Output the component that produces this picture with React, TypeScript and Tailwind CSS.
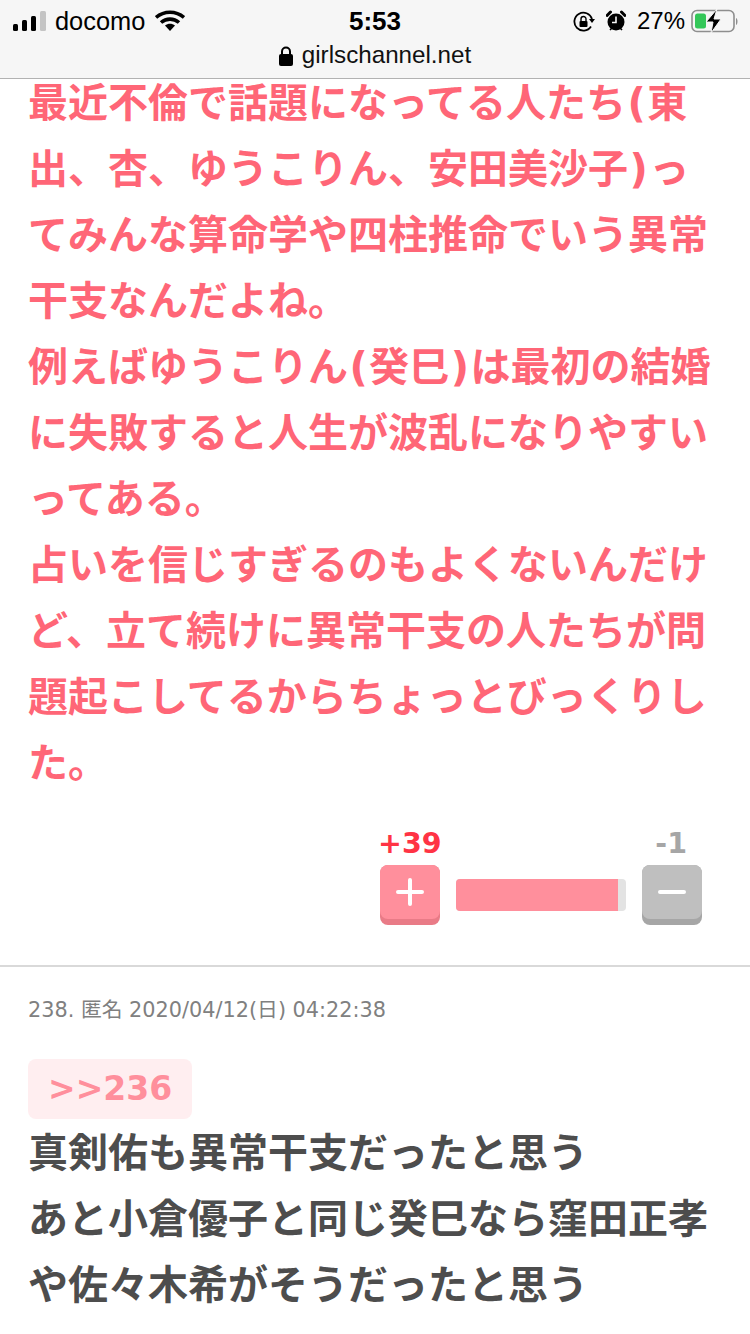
import type { ReactNode } from 'react';

const cjk = "font-['DejaVu_Sans','Noto_Sans_CJK_JP',sans-serif]";

const pinkLines = [
  '最近不倫で話題になってる人たち(東',
  '出、杏、ゆうこりん、安田美沙子)っ',
  'てみんな算命学や四柱推命でいう異常',
  '干支なんだよね。',
  '例えばゆうこりん(癸巳)は最初の結婚',
  'に失敗すると人生が波乱になりやすい',
  'ってある。',
  '占いを信じすぎるのもよくないんだけ',
  'ど、立て続けに異常干支の人たちが問',
  '題起こしてるからちょっとびっくりし',
  'た。',
];

const greyLines = ['真剣佑も異常干支だったと思う', 'あと小倉優子と同じ癸巳なら窪田正孝', 'や佐々木希がそうだったと思う'];

// parens sit a little wider than the font's own advance
function spacedParens(line: string): ReactNode[] {
  return line.split(/([()])/).map((part, i) =>
    part === '(' || part === ')' ? (
      <span key={i} className="mx-[1.5px]">
        {part}
      </span>
    ) : (
      part
    ),
  );
}

function StatusBar() {
  return (
    <div className="flex h-[42px] items-center justify-between pl-[13px] pr-[11px] font-['Liberation_Sans',sans-serif] text-[24px] text-black">
      <div className="flex w-[240px] items-center">
        <svg width="33" height="20" viewBox="0 0 33 20" className="mr-[9px]">
          <rect x="0" y="13" width="5" height="7" rx="1.5" fill="#000" />
          <rect x="9" y="9" width="5" height="11" rx="1.5" fill="#000" />
          <rect x="18" y="5" width="5" height="15" rx="1.5" fill="#000" />
          <rect x="27" y="0" width="6" height="20" rx="1.5" fill="#c4c4c4" />
        </svg>
        <span className="text-[25.4px]">docomo</span>
        <svg width="30" height="22" viewBox="0 0 30 22" className="ml-[10px]">
          <path d="M1 7.5C9 .5 21 .5 29 7.5" fill="none" stroke="#000" strokeWidth="3.6" />
          <path d="M6 12.5c5.200-4.500 12.800-4.500 18 0" fill="none" stroke="#000" strokeWidth="3.6" />
          <path d="M10 15.500c3-2.400 7-2.400 10 0L15 21z" fill="#000" />
        </svg>
      </div>
      <span className="-ml-[2px] text-[26px] font-bold">5:53</span>
      <div className="flex w-[240px] items-center justify-end">
        <svg width="22" height="22" viewBox="0 0 22 22" className="mr-[11px] mt-[1px]">
          <path d="M18 15.500A9 9 0 1 1 19 8" fill="none" stroke="#000" strokeWidth="1.800" />
          <path d="M16 8h6l-3 4z" fill="#000" />
          <rect x="6.500" y="10" width="8" height="6" rx="1" fill="#000" />
          <path d="M8 10V8a2.500 2.500 0 0 1 5 0v2" fill="none" stroke="#000" strokeWidth="1.400" />
        </svg>
        <svg width="20" height="22" viewBox="0 0 20 22" className="mr-[11px]">
          <circle cx="10" cy="12" r="8.500" fill="#000" />
          <path d="M1 5.500 4.500 2M19 5.500 15.500 2" stroke="#000" strokeWidth="3" strokeLinecap="round" />
          <path d="M10 6.500V12.500H6" fill="none" stroke="#f6f6f6" strokeWidth="1.600" />
          <path d="M4 20l2-2M16 20l-2-2" stroke="#000" strokeWidth="1.600" />
        </svg>
        <span>27%</span>
        <svg width="48" height="24" viewBox="0 0 48 24" className="ml-[6px]">
          <rect x="1" y="1.500" width="42" height="21" rx="5" fill="none" stroke="#8e8e8e" strokeWidth="1.600" />
          <rect x="4" y="4.500" width="11" height="15" rx="2.500" fill="#34c759" />
          <path d="M26 0 15 13h7l-2 11 10-14h-7z" fill="#000" stroke="#f6f6f6" strokeWidth="1" />
          <path d="M45 9c2 .5 2 6.500 0 7z" fill="#8e8e8e" />
        </svg>
      </div>
    </div>
  );
}

function AddressBar() {
  return (
    <div className="flex h-[36px] items-start justify-center font-['Liberation_Sans',sans-serif] text-[24.2px] leading-[26px] text-[#111]">
      <svg width="14" height="20" viewBox="0 0 14 20" className="mr-[9px] mt-[4px]">
        <rect x="0" y="8" width="14" height="12" rx="2" fill="#000" />
        <path d="M3 9V5.500a4 4 0 0 1 8 0V9" fill="none" stroke="#000" strokeWidth="2" />
      </svg>
      <span>girlschannel.net</span>
    </div>
  );
}

function VoteBlock() {
  return (
    <div className={`flex justify-end pr-[48px] ${cjk} font-bold`}>
      <div className="flex w-[322px] flex-col">
        <div className="flex h-[36px] items-start justify-between text-[28.5px] leading-[30px]">
          <span className="-ml-[2px] text-[#ff3344]">+39</span>
          <span className="mr-[15px] text-[#a6a6a6]">-1</span>
        </div>
        <div className="flex items-center">
          <button className="relative h-[60px] w-[60px] rounded-[8px] bg-[#e97b87]">
            <span className="absolute inset-x-0 top-0 flex h-[54px] items-center justify-center rounded-[8px] bg-[#ff8f9c]">
              <svg width="28" height="28" viewBox="0 0 28 28">
                <path d="M14 2v24M2 14h24" stroke="#fff" strokeWidth="4" strokeLinecap="round" />
              </svg>
            </span>
          </button>
          <div className="mx-[16px] mb-[1px] flex h-[32px] flex-1 overflow-hidden rounded-[4px] bg-[#e3e3e3]">
            <div className="h-full w-[162px] bg-[#ff8f9c]" />
          </div>
          <button className="relative h-[60px] w-[60px] rounded-[8px] bg-[#a6a6a6]">
            <span className="absolute inset-x-0 top-0 flex h-[54px] items-center justify-center rounded-[8px] bg-[#bfbfbf]">
              <svg width="28" height="28" viewBox="0 0 28 28">
                <path d="M2 14h24" stroke="#fff" strokeWidth="4" strokeLinecap="round" />
              </svg>
            </span>
          </button>
        </div>
      </div>
    </div>
  );
}

export default function App() {
  return (
    <div className="h-[1334px] w-[750px] overflow-hidden bg-white">
      <header className="relative z-10 h-[79px] border-b border-[#b2b2b2] bg-[#f6f6f6]">
        <StatusBar />
        <AddressBar />
      </header>

      <div className={`-mt-[9px] pl-[28px] ${cjk} whitespace-nowrap text-[40px] font-bold leading-[66px] text-[#ff6677]`}>
        {pinkLines.map((line) => (
          <div key={line}>{spacedParens(line)}</div>
        ))}
      </div>

      <div className="mt-[33px]">
        <VoteBlock />
      </div>

      <div className="mt-[40px] border-t-2 border-[#d9d9d9] pl-[28px]">
        <p className={`mt-[29px] ${cjk} text-[20.8px] leading-[28px] text-[#808080]`}>238. 匿名 2020/04/12(日) 04:22:38</p>
        <div className={`mt-[35px] inline-block h-[60px] rounded-[8px] bg-[#ffeef0] px-[20px] ${cjk} text-[33px] font-bold leading-[60px] text-[#ff8f9c]`}>
          &gt;&gt;236
        </div>
        <div className={`mt-[1px] ${cjk} whitespace-nowrap text-[40px] font-bold leading-[66px] text-[#4d4d4d]`}>
          {greyLines.map((line) => (
            <div key={line}>{line}</div>
          ))}
        </div>
      </div>
    </div>
  );
}
